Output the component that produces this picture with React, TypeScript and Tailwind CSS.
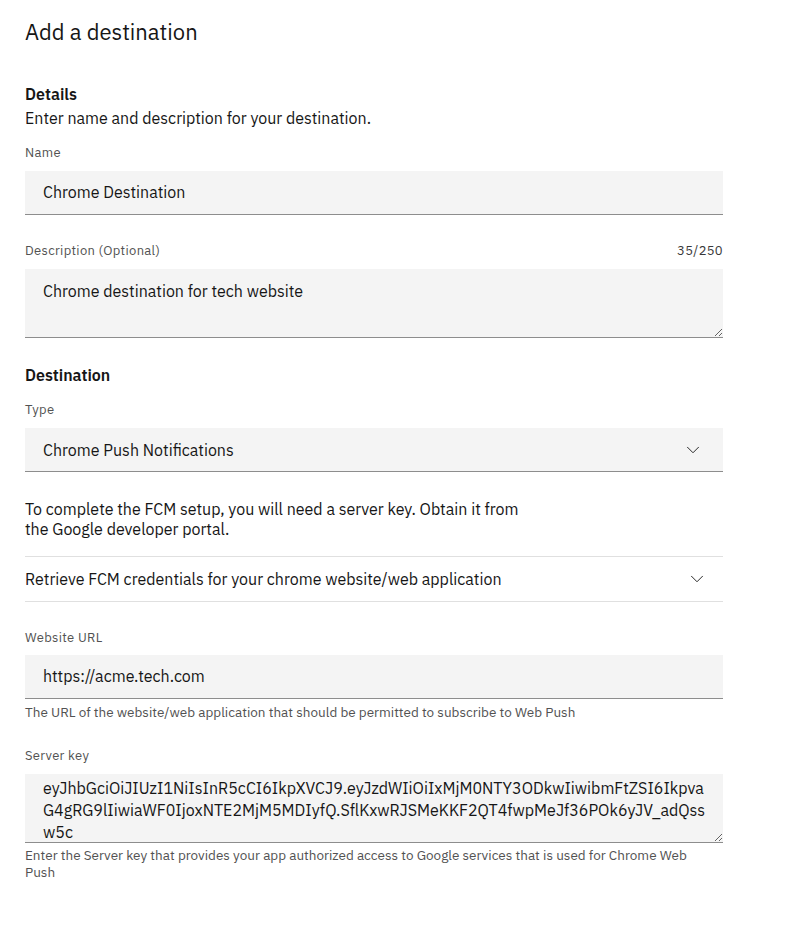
import { ChevronDown } from "lucide-react";

const font = { fontFamily: '"IBM Plex Sans", "Noto Sans", Arial, sans-serif' };

function Label({ children, right }: { children: React.ReactNode; right?: string }) {
  return (
    <div className="flex h-[18px] items-center justify-between text-[13px] leading-[18px] tracking-[0.32px] text-[#525252]">
      <span>{children}</span>
      {right && <span className="text-[#393939]">{right}</span>}
    </div>
  );
}

function TextInput({ value }: { value: string }) {
  return (
    <div className="flex h-[44px] items-center border-b border-[#8d8d8d] bg-[#f4f4f4] px-[18px] pb-[1px] text-[16px] text-[#161616]">
      {value}
    </div>
  );
}

export default function App() {
  return (
    <div style={font} className="min-h-[949px] w-[800px] bg-white px-[25px] pt-[17px] text-[#161616]">
      <h1 className="text-[22px] leading-[30px] font-normal">Add a destination</h1>

      <section className="mt-[37px]">
        <h2 className="text-[16px] leading-[20px] font-semibold">Details</h2>
        <p className="mt-[4px] text-[16px] leading-[20px]">Enter name and description for your destination.</p>

        <div className="mt-[16px] w-[698px]">
          <Label>Name</Label>
          <div className="mt-[9px]">
            <TextInput value="Chrome Destination" />
          </div>
        </div>

        <div className="mt-[27px] w-[698px]">
          <Label right="35/250">Description (Optional)</Label>
          <textarea
            readOnly
            value="Chrome destination for tech website"
            className="mt-[9px] block h-[69px] w-full resize-y border-b border-[#8d8d8d] bg-[#f4f4f4] px-[18px] pt-[11px] text-[16px] leading-[22px] text-[#161616] outline-none"
          />
        </div>
      </section>

      <section className="mt-[27px] w-[698px]">
        <h2 className="text-[16px] leading-[20px] font-semibold">Destination</h2>

        <div className="mt-[16px]">
          <Label>Type</Label>
          <div className="mt-[9px] flex h-[44px] items-center justify-between border-b border-[#8d8d8d] bg-[#f4f4f4] pl-[18px] pr-[19px] text-[16px]">
            <span>Chrome Push Notifications</span>
            <ChevronDown size={22} strokeWidth={1} />
          </div>
        </div>

        <p className="mt-[27px] w-[505px] text-[16px] leading-[20px]">
          To complete the FCM setup, you will need a server key. Obtain it from the Google developer portal.
        </p>

        <div className="mt-[17px] flex h-[46px] items-center justify-between border-y border-[#e0e0e0] pr-[15px] text-[16px]">
          <span>Retrieve FCM credentials for your chrome website/web application</span>
          <ChevronDown size={22} strokeWidth={1} />
        </div>

        <div className="mt-[27px]">
          <Label>Website URL</Label>
          <div className="mt-[8px]">
            <TextInput value="https://acme.tech.com" />
          </div>
          <p className="mt-[5px] text-[13.5px] leading-[17px] text-[#525252]">
            The URL of the website/web application that should be permitted to subscribe to Web Push
          </p>
        </div>

        <div className="mt-[26px]">
          <Label>Server key</Label>
          <textarea
            readOnly
            value="eyJhbGciOiJIUzI1NiIsInR5cCI6IkpXVCJ9.eyJzdWIiOiIxMjM0NTY3ODkwIiwibmFtZSI6IkpvaG4gRG9lIiwiaWF0IjoxNTE2MjM5MDIyfQ.SflKxwRJSMeKKF2QT4fwpMeJf36POk6yJV_adQssw5c"
            className="mt-[9px] block h-[69px] w-full resize-y overflow-hidden border-b border-[#8d8d8d] bg-[#f4f4f4] pl-[18px] pr-[16px] pt-[3px] text-[16px] leading-[22px] text-[#161616] outline-none [word-break:break-all]"
          />
          <p className="mt-[4px] pr-[16px] text-[13.5px] leading-[17px] text-[#525252]">
            Enter the Server key that provides your app authorized access to Google services that is used for Chrome Web Push
          </p>
        </div>
      </section>
    </div>
  );
}
